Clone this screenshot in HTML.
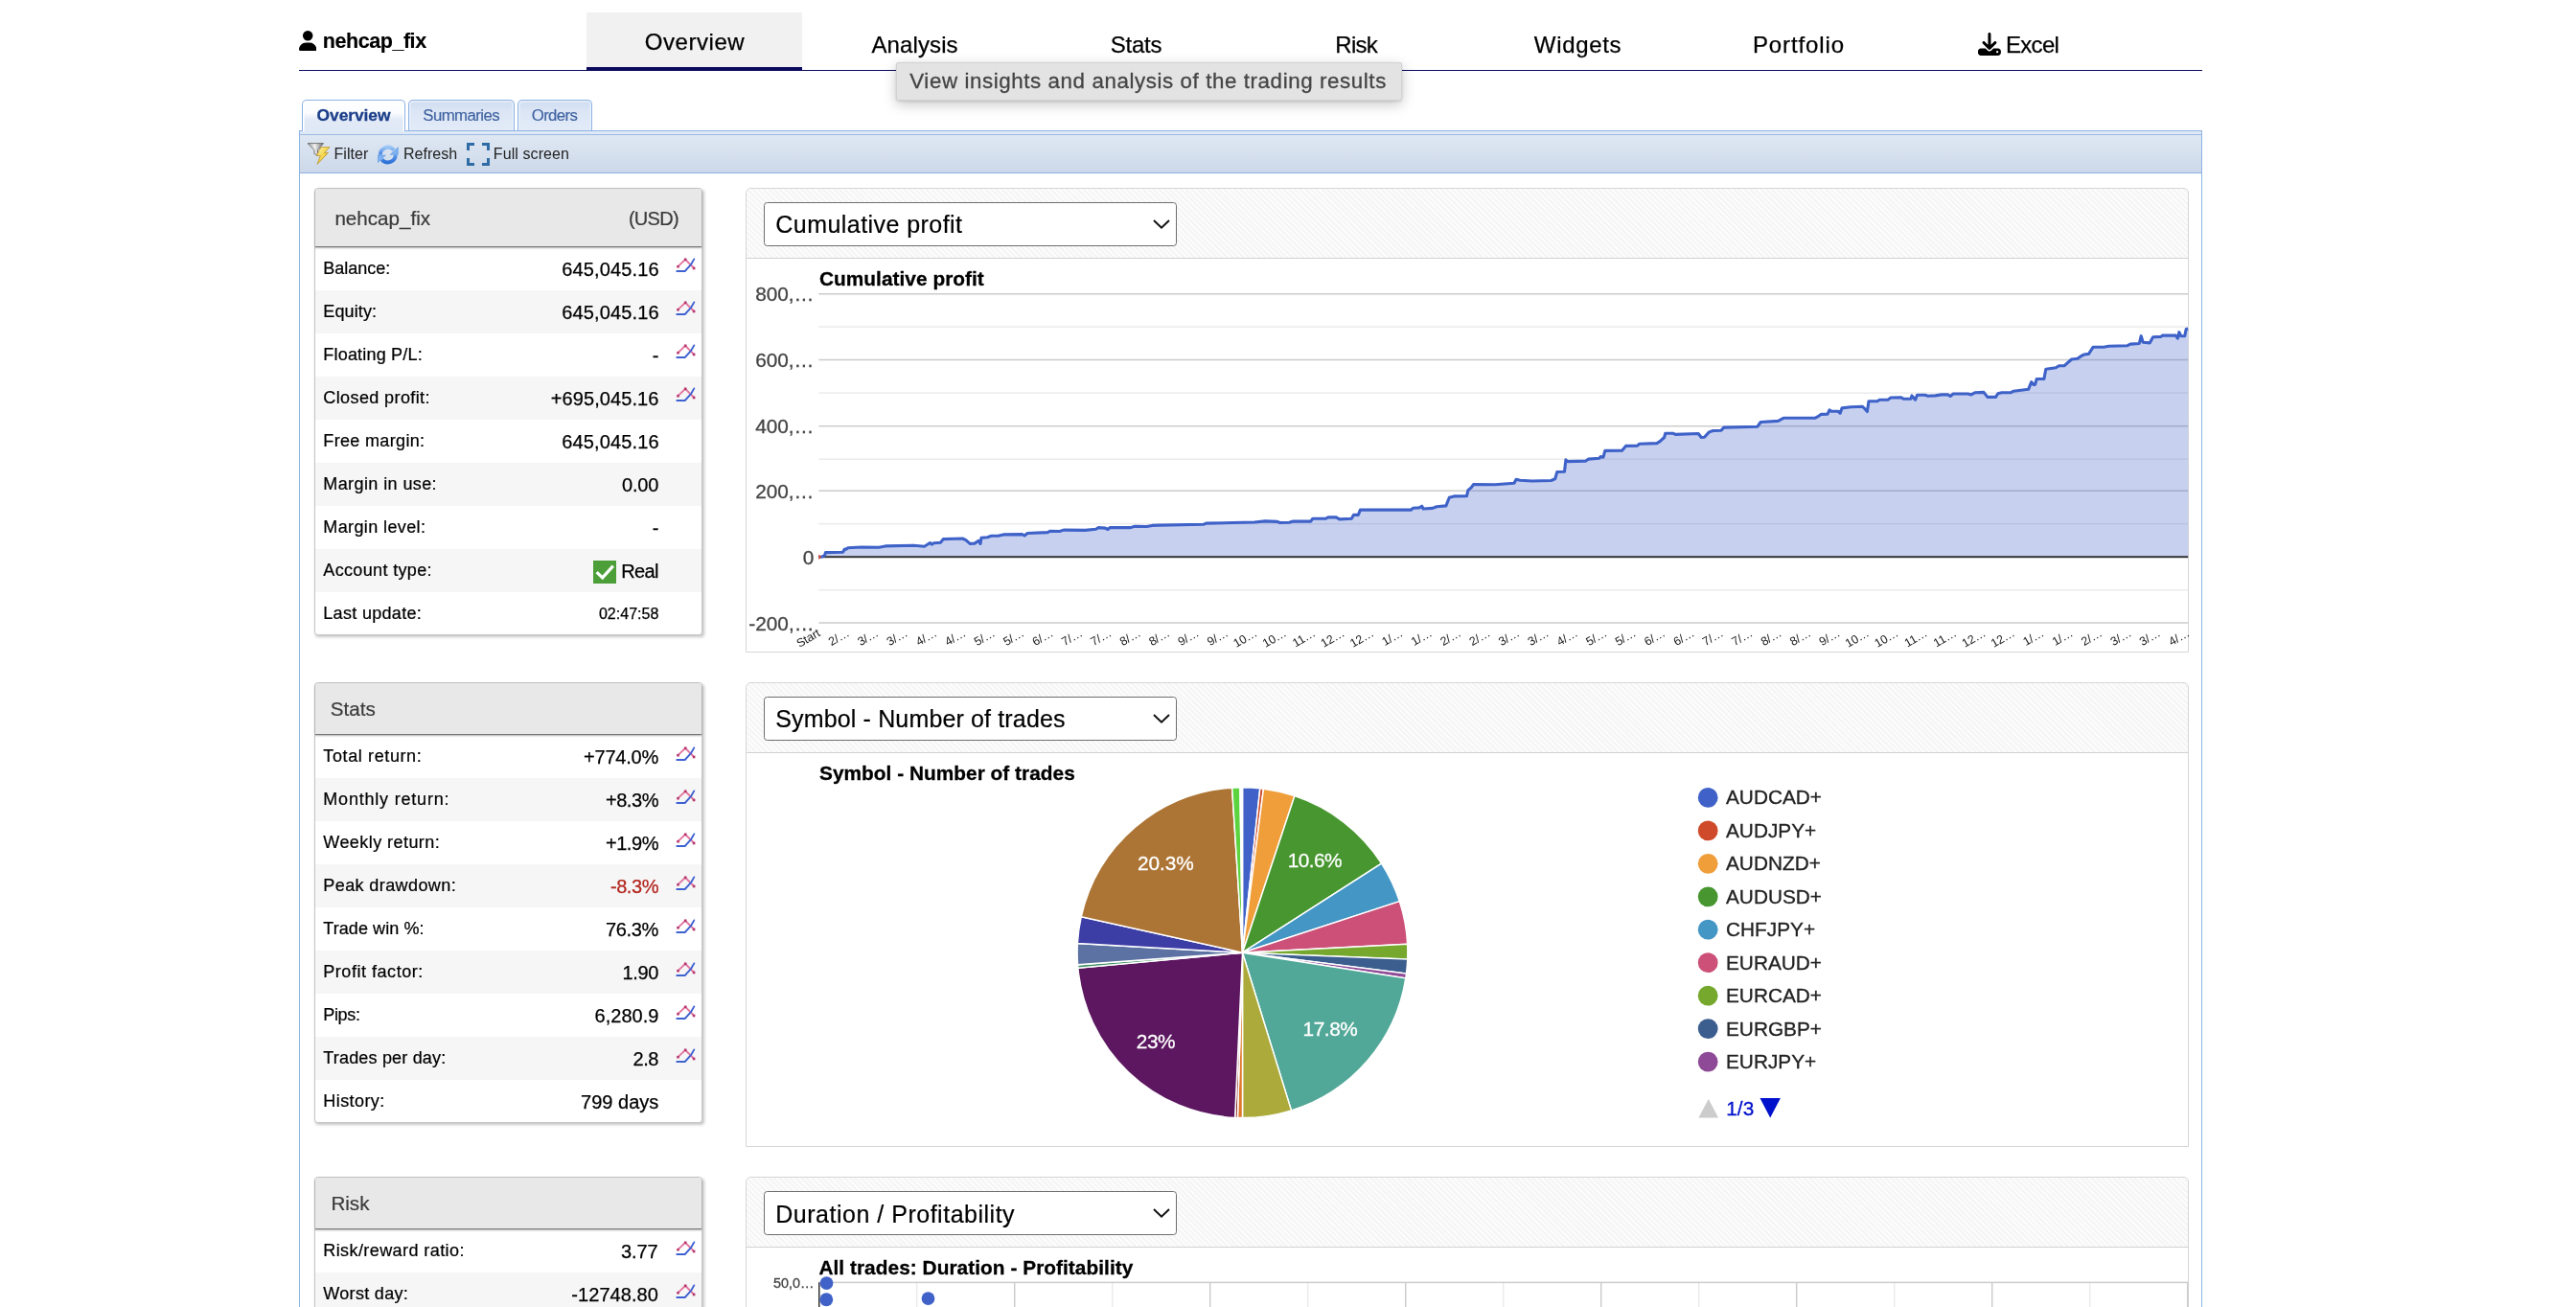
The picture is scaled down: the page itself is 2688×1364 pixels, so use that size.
<!DOCTYPE html>
<html><head><meta charset="utf-8"><title>nehcap_fix</title>
<style>
html,body{margin:0;padding:0;background:#fff;}
body{width:2688px;height:1364px;overflow:hidden;position:relative;font-family:"Liberation Sans",sans-serif;}
.a{position:absolute;}
.t{position:absolute;white-space:nowrap;font-family:"Liberation Sans",sans-serif;}
#w{position:absolute;left:0;top:0;width:2688px;height:1364px;will-change:transform;}
</style></head><body><div id="w">
<div class="a" style="left:612px;top:13px;width:225px;height:61px;background:#f1f1f1;border-bottom:4px solid #0b0b5e;box-sizing:border-box;"></div>
<div class="a" style="left:312px;top:73px;width:1986px;height:1px;background:#0b0b5e;"></div>
<svg class="a" style="left:312px;top:32.4px" width="18.4" height="21" viewBox="0 0 448 512"><path fill="#000" d="M224 256A128 128 0 1 0 224 0a128 128 0 1 0 0 256zm-45.700 48C79.800 304 0 383.800 0 482.300C0 498.700 13.300 512 29.700 512H418.300c16.400 0 29.700-13.300 29.700-29.700C448 383.800 368.200 304 269.700 304H178.300z"/></svg>
<div class="t" style="left:336.80px;top:30.25px;font-size:21.5px;line-height:26px;color:#000;font-weight:bold;letter-spacing:-0.448px;-webkit-text-stroke:0.15px #000;">nehcap_fix</div>
<div class="t" style="left:672.70px;top:28.58px;font-size:24px;line-height:29px;color:#000;letter-spacing:0.569px;-webkit-text-stroke:0.25px #000;">Overview</div>
<div class="t" style="left:909.50px;top:32.18px;font-size:24px;line-height:29px;color:#000;letter-spacing:0.103px;-webkit-text-stroke:0.25px #000;">Analysis</div>
<div class="t" style="left:1158.75px;top:32.18px;font-size:24px;line-height:29px;color:#000;letter-spacing:-0.242px;-webkit-text-stroke:0.25px #000;">Stats</div>
<div class="t" style="left:1393.30px;top:32.18px;font-size:24px;line-height:29px;color:#000;letter-spacing:-0.700px;-webkit-text-stroke:0.25px #000;">Risk</div>
<div class="t" style="left:1600.80px;top:32.18px;font-size:24px;line-height:29px;color:#000;letter-spacing:0.677px;-webkit-text-stroke:0.25px #000;">Widgets</div>
<div class="t" style="left:1828.90px;top:32.18px;font-size:24px;line-height:29px;color:#000;letter-spacing:0.900px;-webkit-text-stroke:0.25px #000;">Portfolio</div>
<div class="t" style="left:2093.00px;top:31.98px;font-size:24px;line-height:29px;color:#000;letter-spacing:-0.700px;-webkit-text-stroke:0.25px #000;">Excel</div>
<svg class="a" style="left:2063.9px;top:34px" width="23.9" height="23.9" viewBox="0 0 512 512"><path fill="#000" d="M288 32c0-17.700-14.300-32-32-32s-32 14.300-32 32V274.700l-73.400-73.400c-12.500-12.500-32.800-12.500-45.300 0s-12.500 32.800 0 45.300l128 128c12.500 12.500 32.800 12.500 45.300 0l128-128c12.500-12.500 12.500-32.800 0-45.300s-32.800-12.500-45.300 0L288 274.700V32zM64 352c-35.300 0-64 28.700-64 64v32c0 35.300 28.700 64 64 64H448c35.300 0 64-28.700 64-64V416c0-35.300-28.700-64-64-64H346.500l-45.300 45.300c-25 25-65.500 25-90.500 0L165.500 352H64zm368 56a24 24 0 1 1 0 48 24 24 0 1 1 0-48z"/></svg>
<div class="a" style="left:312px;top:136px;width:1986px;height:1300px;border:1px solid #8db2e3;border-right-width:1.5px;box-sizing:border-box;background:#fff;"></div>
<div class="a" style="left:313px;top:137px;width:1983.5px;height:3px;background:#dfe8f6;"></div>
<div class="a" style="left:313px;top:140px;width:1983.5px;height:41px;background:linear-gradient(#dee7f3,#d6e0ee 50%,#ccd8e9);border-top:1px solid #9dbbe6;border-bottom:1px solid #8fb0e2;box-sizing:border-box;"></div>
<div class="a" style="left:315px;top:104px;width:107.69999999999999px;height:33px;border:1.5px solid #8db2e3;border-bottom:none;border-radius:5px 5px 0 0;box-sizing:border-box;background:linear-gradient(#fff,#fbfcfe 40%,#e2eaf7 62%,#dfe8f6);box-shadow:inset 1.5px 1.5px 0 #fff,inset -1.5px 0 0 #fff;"></div>
<div class="a" style="left:426.2px;top:104px;width:110.59999999999997px;height:32px;border:1.5px solid #8db2e3;border-bottom:none;border-radius:5px 5px 0 0;box-sizing:border-box;background:linear-gradient(#cfdcf1,#dbe5f5 35%,#e3ebf8);box-shadow:inset 1.5px 1.5px 0 #e9f0fa,inset -1.5px 0 0 #e9f0fa;"></div>
<div class="a" style="left:540.2px;top:104px;width:77.5px;height:32px;border:1.5px solid #8db2e3;border-bottom:none;border-radius:5px 5px 0 0;box-sizing:border-box;background:linear-gradient(#cfdcf1,#dbe5f5 35%,#e3ebf8);box-shadow:inset 1.5px 1.5px 0 #e9f0fa,inset -1.5px 0 0 #e9f0fa;"></div>
<div class="t" style="left:330.60px;top:110.47px;font-size:17.4px;line-height:21px;color:#1c3f8a;font-weight:bold;letter-spacing:-0.061px;-webkit-text-stroke:0.3px #1c3f8a;">Overview</div>
<div class="t" style="left:441.30px;top:111.18px;font-size:16.8px;line-height:20px;color:#3f62a0;letter-spacing:-0.576px;-webkit-text-stroke:0.15px #3f62a0;">Summaries</div>
<div class="t" style="left:554.70px;top:111.18px;font-size:16.8px;line-height:20px;color:#3f62a0;letter-spacing:-0.602px;-webkit-text-stroke:0.15px #3f62a0;">Orders</div>
<div class="t" style="left:348.50px;top:150.86px;font-size:16px;line-height:19px;color:#222;letter-spacing:0.036px;">Filter</div>
<div class="t" style="left:420.90px;top:150.86px;font-size:16px;line-height:19px;color:#222;letter-spacing:0.050px;">Refresh</div>
<div class="t" style="left:514.80px;top:150.86px;font-size:16px;line-height:19px;color:#222;letter-spacing:0.096px;">Full screen</div>
<svg class="a" style="left:320px;top:148px" width="26" height="25" viewBox="0 0 26 25">
<defs><linearGradient id="fg" x1="0" x2="1"><stop offset="0" stop-color="#9a9a9a"/><stop offset=".45" stop-color="#f2f2f2"/><stop offset="1" stop-color="#6d6d6d"/></linearGradient>
<linearGradient id="yg" x1="0" y1="0" x2="1" y2="1"><stop offset="0" stop-color="#fff6b0"/><stop offset=".5" stop-color="#f3d54a"/><stop offset="1" stop-color="#c9971a"/></linearGradient></defs>
<path d="M1 1.600H17.500L11.500 8.500V14.500L8 12.500V8.500Z" fill="url(#fg)" stroke="#5c5c5c" stroke-width=".8"/>
<path d="M15 5.600H24L18.500 11.400H22.500L11 23.400L14.300 14.400H10.300Z" fill="url(#yg)" stroke="#b58a1c" stroke-width=".7"/></svg>
<svg class="a" style="left:394.400px;top:150.500px" width="22" height="22" viewBox="0 0 22 22">
<defs><linearGradient id="rg" x1="0" y1="0" x2="0" y2="1"><stop offset="0" stop-color="#9cc6f6"/><stop offset="1" stop-color="#3f7fe0"/></linearGradient>
<linearGradient id="rg2" x1="0" y1="0" x2="0" y2="1"><stop offset="0" stop-color="#5d9bec"/><stop offset="1" stop-color="#2f72d8"/></linearGradient></defs>
<path d="M2.800 10.600A8 8 0 0 1 17 5.600" fill="none" stroke="url(#rg)" stroke-width="3.900"/>
<path d="M21.300 2.800V10.300H13.200Z" fill="#7fb2f0" stroke="#4a8ae3" stroke-width=".5"/>
<path d="M18.700 10.400A8 8 0 0 1 4.500 15.400" fill="none" stroke="url(#rg2)" stroke-width="3.900"/>
<path d="M.200 18.600V11.100H8.300Z" fill="#7fb2f0" stroke="#4a8ae3" stroke-width=".5"/></svg>
<svg class="a" style="left:487px;top:149px" width="24" height="24" viewBox="0 0 24 24"><path d="M1.500 8V1.500H8M16 1.500H22.500V8M22.500 16V22.500H16M8 22.500H1.500V16" fill="none" stroke="#2f6ca6" stroke-width="3"/></svg>
<div class="a" style="left:328px;top:196px;width:405px;height:466.5px;border:1px solid #c4c4c4;border-radius:3.5px;box-sizing:border-box;background:#fff;box-shadow:1.5px 2px 3px rgba(0,0,0,.22);overflow:hidden;"></div>
<div class="a" style="left:329px;top:197px;width:403px;height:59.5px;background:#e8e8e8;border-bottom:1.5px solid #777;border-radius:3px 3px 0 0;box-shadow:0 1px 2px rgba(0,0,0,.3);"></div>
<div class="t" style="left:349.40px;top:215.36px;font-size:20.6px;line-height:25px;color:#3a3a3a;-webkit-text-stroke:0.2px #3a3a3a;">nehcap_fix</div>
<div class="t" style="left:655.90px;top:216.07px;font-size:20px;line-height:24px;color:#3a3a3a;letter-spacing:-0.700px;-webkit-text-stroke:0.2px #3a3a3a;">(USD)</div>
<div class="t" style="left:337.30px;top:268.66px;font-size:18px;line-height:22px;color:#000;letter-spacing:-0.010px;-webkit-text-stroke:0.22px #000;">Balance:</div>
<div class="t" style="left:586.25px;top:268.57px;font-size:20px;line-height:24px;color:#000;letter-spacing:0.128px;-webkit-text-stroke:0.25px #000;">645,045.16</div>
<svg class="a" style="left:705px;top:268.3px" width="22" height="17" viewBox="0 0 22 17"><path d="M2.400 10.100L10.100 2.800L19.300 12" fill="none" stroke="#e2759f" stroke-width="1.900"/><path d="M1.300 15H9.700L16.200 7.800L19.300 2.400" fill="none" stroke="#3f62d2" stroke-width="1.900" stroke-linejoin="round" stroke-linecap="round"/><rect x="1.200" y="8.900" width="2.600" height="2.600" fill="#b5376f"/><rect x="8.900" y="1.500" width="2.600" height="2.600" fill="#b5376f"/><rect x="17.800" y="10.700" width="2.600" height="2.600" fill="#b5376f"/></svg>
<div class="a" style="left:329px;top:302.5px;width:403px;height:45px;background:#f6f6f6;"></div>
<div class="t" style="left:337.30px;top:313.66px;font-size:18px;line-height:22px;color:#000;letter-spacing:0.120px;-webkit-text-stroke:0.22px #000;">Equity:</div>
<div class="t" style="left:586.25px;top:313.57px;font-size:20px;line-height:24px;color:#000;letter-spacing:0.128px;-webkit-text-stroke:0.25px #000;">645,045.16</div>
<svg class="a" style="left:705px;top:313.3px" width="22" height="17" viewBox="0 0 22 17"><path d="M2.400 10.100L10.100 2.800L19.300 12" fill="none" stroke="#e2759f" stroke-width="1.900"/><path d="M1.300 15H9.700L16.200 7.800L19.300 2.400" fill="none" stroke="#3f62d2" stroke-width="1.900" stroke-linejoin="round" stroke-linecap="round"/><rect x="1.200" y="8.900" width="2.600" height="2.600" fill="#b5376f"/><rect x="8.900" y="1.500" width="2.600" height="2.600" fill="#b5376f"/><rect x="17.800" y="10.700" width="2.600" height="2.600" fill="#b5376f"/></svg>
<div class="t" style="left:337.30px;top:358.66px;font-size:18px;line-height:22px;color:#000;letter-spacing:0.193px;-webkit-text-stroke:0.22px #000;">Floating P/L:</div>
<div class="t" style="left:680.80px;top:358.57px;font-size:20px;line-height:24px;color:#000;letter-spacing:0.180px;-webkit-text-stroke:0.25px #000;">-</div>
<svg class="a" style="left:705px;top:358.3px" width="22" height="17" viewBox="0 0 22 17"><path d="M2.400 10.100L10.100 2.800L19.300 12" fill="none" stroke="#e2759f" stroke-width="1.900"/><path d="M1.300 15H9.700L16.200 7.800L19.300 2.400" fill="none" stroke="#3f62d2" stroke-width="1.900" stroke-linejoin="round" stroke-linecap="round"/><rect x="1.200" y="8.900" width="2.600" height="2.600" fill="#b5376f"/><rect x="8.900" y="1.500" width="2.600" height="2.600" fill="#b5376f"/><rect x="17.800" y="10.700" width="2.600" height="2.600" fill="#b5376f"/></svg>
<div class="a" style="left:329px;top:392.5px;width:403px;height:45px;background:#f6f6f6;"></div>
<div class="t" style="left:337.30px;top:403.66px;font-size:18px;line-height:22px;color:#000;letter-spacing:0.398px;-webkit-text-stroke:0.22px #000;">Closed profit:</div>
<div class="t" style="left:574.75px;top:403.57px;font-size:20px;line-height:24px;color:#000;letter-spacing:0.085px;-webkit-text-stroke:0.25px #000;">+695,045.16</div>
<svg class="a" style="left:705px;top:403.3px" width="22" height="17" viewBox="0 0 22 17"><path d="M2.400 10.100L10.100 2.800L19.300 12" fill="none" stroke="#e2759f" stroke-width="1.900"/><path d="M1.300 15H9.700L16.200 7.800L19.300 2.400" fill="none" stroke="#3f62d2" stroke-width="1.900" stroke-linejoin="round" stroke-linecap="round"/><rect x="1.200" y="8.900" width="2.600" height="2.600" fill="#b5376f"/><rect x="8.900" y="1.500" width="2.600" height="2.600" fill="#b5376f"/><rect x="17.800" y="10.700" width="2.600" height="2.600" fill="#b5376f"/></svg>
<div class="t" style="left:337.30px;top:448.66px;font-size:18px;line-height:22px;color:#000;letter-spacing:0.340px;-webkit-text-stroke:0.22px #000;">Free margin:</div>
<div class="t" style="left:586.25px;top:448.57px;font-size:20px;line-height:24px;color:#000;letter-spacing:0.128px;-webkit-text-stroke:0.25px #000;">645,045.16</div>
<div class="a" style="left:329px;top:482.5px;width:403px;height:45px;background:#f6f6f6;"></div>
<div class="t" style="left:337.30px;top:493.66px;font-size:18px;line-height:22px;color:#000;letter-spacing:0.405px;-webkit-text-stroke:0.22px #000;">Margin in use:</div>
<div class="t" style="left:649.10px;top:493.57px;font-size:20px;line-height:24px;color:#000;letter-spacing:-0.233px;-webkit-text-stroke:0.25px #000;">0.00</div>
<div class="t" style="left:337.30px;top:538.66px;font-size:18px;line-height:22px;color:#000;letter-spacing:0.387px;-webkit-text-stroke:0.22px #000;">Margin level:</div>
<div class="t" style="left:680.80px;top:538.57px;font-size:20px;line-height:24px;color:#000;letter-spacing:0.180px;-webkit-text-stroke:0.25px #000;">-</div>
<div class="a" style="left:329px;top:572.5px;width:403px;height:45px;background:#f6f6f6;"></div>
<div class="t" style="left:337.30px;top:583.66px;font-size:18px;line-height:22px;color:#000;letter-spacing:0.352px;-webkit-text-stroke:0.22px #000;">Account type:</div>
<div class="t" style="left:648.30px;top:583.57px;font-size:20px;line-height:24px;color:#000;letter-spacing:-0.700px;-webkit-text-stroke:0.25px #000;">Real</div>
<div class="t" style="left:337.30px;top:628.66px;font-size:18px;line-height:22px;color:#000;letter-spacing:0.314px;-webkit-text-stroke:0.22px #000;">Last update:</div>
<div class="t" style="left:624.90px;top:631.46px;font-size:16px;line-height:19px;color:#000;letter-spacing:0.037px;-webkit-text-stroke:0.25px #000;">02:47:58</div>
<svg class="a" style="left:619px;top:585px" width="24" height="24" viewBox="0 0 24 24"><rect width="24" height="24" fill="#4c9f38"/><path d="M3.600 12.200L9.700 17.900L20.800 5.700" fill="none" stroke="#fff" stroke-width="3.200"/></svg>
<div class="a" style="left:328px;top:712px;width:405px;height:460px;border:1px solid #c4c4c4;border-radius:3.5px;box-sizing:border-box;background:#fff;box-shadow:1.5px 2px 3px rgba(0,0,0,.22);overflow:hidden;"></div>
<div class="a" style="left:329px;top:713px;width:403px;height:53px;background:#e8e8e8;border-bottom:1.5px solid #777;border-radius:3px 3px 0 0;box-shadow:0 1px 2px rgba(0,0,0,.3);"></div>
<div class="t" style="left:344.75px;top:726.96px;font-size:20.6px;line-height:25px;color:#3a3a3a;-webkit-text-stroke:0.2px #3a3a3a;">Stats</div>
<div class="t" style="left:337.30px;top:778.16px;font-size:18px;line-height:22px;color:#000;letter-spacing:0.617px;-webkit-text-stroke:0.22px #000;">Total return:</div>
<div class="t" style="left:609.00px;top:778.07px;font-size:20px;line-height:24px;color:#000;letter-spacing:-0.200px;-webkit-text-stroke:0.25px #000;">+774.0%</div>
<svg class="a" style="left:705px;top:777.8px" width="22" height="17" viewBox="0 0 22 17"><path d="M2.400 10.100L10.100 2.800L19.300 12" fill="none" stroke="#e2759f" stroke-width="1.900"/><path d="M1.300 15H9.700L16.200 7.800L19.300 2.400" fill="none" stroke="#3f62d2" stroke-width="1.900" stroke-linejoin="round" stroke-linecap="round"/><rect x="1.200" y="8.900" width="2.600" height="2.600" fill="#b5376f"/><rect x="8.900" y="1.500" width="2.600" height="2.600" fill="#b5376f"/><rect x="17.800" y="10.700" width="2.600" height="2.600" fill="#b5376f"/></svg>
<div class="a" style="left:329px;top:812px;width:403px;height:45px;background:#f6f6f6;"></div>
<div class="t" style="left:337.30px;top:823.16px;font-size:18px;line-height:22px;color:#000;letter-spacing:0.796px;-webkit-text-stroke:0.22px #000;">Monthly return:</div>
<div class="t" style="left:631.90px;top:823.07px;font-size:20px;line-height:24px;color:#000;letter-spacing:-0.425px;-webkit-text-stroke:0.25px #000;">+8.3%</div>
<svg class="a" style="left:705px;top:822.8px" width="22" height="17" viewBox="0 0 22 17"><path d="M2.400 10.100L10.100 2.800L19.300 12" fill="none" stroke="#e2759f" stroke-width="1.900"/><path d="M1.300 15H9.700L16.200 7.800L19.300 2.400" fill="none" stroke="#3f62d2" stroke-width="1.900" stroke-linejoin="round" stroke-linecap="round"/><rect x="1.200" y="8.900" width="2.600" height="2.600" fill="#b5376f"/><rect x="8.900" y="1.500" width="2.600" height="2.600" fill="#b5376f"/><rect x="17.800" y="10.700" width="2.600" height="2.600" fill="#b5376f"/></svg>
<div class="t" style="left:337.30px;top:868.16px;font-size:18px;line-height:22px;color:#000;letter-spacing:0.439px;-webkit-text-stroke:0.22px #000;">Weekly return:</div>
<div class="t" style="left:631.90px;top:868.07px;font-size:20px;line-height:24px;color:#000;letter-spacing:-0.425px;-webkit-text-stroke:0.25px #000;">+1.9%</div>
<svg class="a" style="left:705px;top:867.8px" width="22" height="17" viewBox="0 0 22 17"><path d="M2.400 10.100L10.100 2.800L19.300 12" fill="none" stroke="#e2759f" stroke-width="1.900"/><path d="M1.300 15H9.700L16.200 7.800L19.300 2.400" fill="none" stroke="#3f62d2" stroke-width="1.900" stroke-linejoin="round" stroke-linecap="round"/><rect x="1.200" y="8.900" width="2.600" height="2.600" fill="#b5376f"/><rect x="8.900" y="1.500" width="2.600" height="2.600" fill="#b5376f"/><rect x="17.800" y="10.700" width="2.600" height="2.600" fill="#b5376f"/></svg>
<div class="a" style="left:329px;top:902px;width:403px;height:45px;background:#f6f6f6;"></div>
<div class="t" style="left:337.30px;top:913.16px;font-size:18px;line-height:22px;color:#000;letter-spacing:0.406px;-webkit-text-stroke:0.22px #000;">Peak drawdown:</div>
<div class="t" style="left:636.90px;top:913.07px;font-size:20px;line-height:24px;color:#b3261e;letter-spacing:-0.425px;-webkit-text-stroke:0.25px #b3261e;">-8.3%</div>
<svg class="a" style="left:705px;top:912.8px" width="22" height="17" viewBox="0 0 22 17"><path d="M2.400 10.100L10.100 2.800L19.300 12" fill="none" stroke="#e2759f" stroke-width="1.900"/><path d="M1.300 15H9.700L16.200 7.800L19.300 2.400" fill="none" stroke="#3f62d2" stroke-width="1.900" stroke-linejoin="round" stroke-linecap="round"/><rect x="1.200" y="8.900" width="2.600" height="2.600" fill="#b5376f"/><rect x="8.900" y="1.500" width="2.600" height="2.600" fill="#b5376f"/><rect x="17.800" y="10.700" width="2.600" height="2.600" fill="#b5376f"/></svg>
<div class="t" style="left:337.30px;top:958.16px;font-size:18px;line-height:22px;color:#000;letter-spacing:0.073px;-webkit-text-stroke:0.22px #000;">Trade win %:</div>
<div class="t" style="left:631.90px;top:958.07px;font-size:20px;line-height:24px;color:#000;letter-spacing:-0.325px;-webkit-text-stroke:0.25px #000;">76.3%</div>
<svg class="a" style="left:705px;top:957.8px" width="22" height="17" viewBox="0 0 22 17"><path d="M2.400 10.100L10.100 2.800L19.300 12" fill="none" stroke="#e2759f" stroke-width="1.900"/><path d="M1.300 15H9.700L16.200 7.800L19.300 2.400" fill="none" stroke="#3f62d2" stroke-width="1.900" stroke-linejoin="round" stroke-linecap="round"/><rect x="1.200" y="8.900" width="2.600" height="2.600" fill="#b5376f"/><rect x="8.900" y="1.500" width="2.600" height="2.600" fill="#b5376f"/><rect x="17.800" y="10.700" width="2.600" height="2.600" fill="#b5376f"/></svg>
<div class="a" style="left:329px;top:992px;width:403px;height:45px;background:#f6f6f6;"></div>
<div class="t" style="left:337.30px;top:1003.16px;font-size:18px;line-height:22px;color:#000;letter-spacing:0.533px;-webkit-text-stroke:0.22px #000;">Profit factor:</div>
<div class="t" style="left:649.60px;top:1003.07px;font-size:20px;line-height:24px;color:#000;letter-spacing:-0.400px;-webkit-text-stroke:0.25px #000;">1.90</div>
<svg class="a" style="left:705px;top:1002.8px" width="22" height="17" viewBox="0 0 22 17"><path d="M2.400 10.100L10.100 2.800L19.300 12" fill="none" stroke="#e2759f" stroke-width="1.900"/><path d="M1.300 15H9.700L16.200 7.800L19.300 2.400" fill="none" stroke="#3f62d2" stroke-width="1.900" stroke-linejoin="round" stroke-linecap="round"/><rect x="1.200" y="8.900" width="2.600" height="2.600" fill="#b5376f"/><rect x="8.900" y="1.500" width="2.600" height="2.600" fill="#b5376f"/><rect x="17.800" y="10.700" width="2.600" height="2.600" fill="#b5376f"/></svg>
<div class="t" style="left:337.30px;top:1048.16px;font-size:18px;line-height:22px;color:#000;letter-spacing:-0.340px;-webkit-text-stroke:0.22px #000;">Pips:</div>
<div class="t" style="left:620.60px;top:1048.07px;font-size:20px;line-height:24px;color:#000;-webkit-text-stroke:0.25px #000;">6,280.9</div>
<svg class="a" style="left:705px;top:1047.8px" width="22" height="17" viewBox="0 0 22 17"><path d="M2.400 10.100L10.100 2.800L19.300 12" fill="none" stroke="#e2759f" stroke-width="1.900"/><path d="M1.300 15H9.700L16.200 7.800L19.300 2.400" fill="none" stroke="#3f62d2" stroke-width="1.900" stroke-linejoin="round" stroke-linecap="round"/><rect x="1.200" y="8.900" width="2.600" height="2.600" fill="#b5376f"/><rect x="8.900" y="1.500" width="2.600" height="2.600" fill="#b5376f"/><rect x="17.800" y="10.700" width="2.600" height="2.600" fill="#b5376f"/></svg>
<div class="a" style="left:329px;top:1082px;width:403px;height:45px;background:#f6f6f6;"></div>
<div class="t" style="left:337.30px;top:1093.16px;font-size:18px;line-height:22px;color:#000;letter-spacing:0.178px;-webkit-text-stroke:0.22px #000;">Trades per day:</div>
<div class="t" style="left:660.60px;top:1093.07px;font-size:20px;line-height:24px;color:#000;letter-spacing:-0.500px;-webkit-text-stroke:0.25px #000;">2.8</div>
<svg class="a" style="left:705px;top:1092.8px" width="22" height="17" viewBox="0 0 22 17"><path d="M2.400 10.100L10.100 2.800L19.300 12" fill="none" stroke="#e2759f" stroke-width="1.900"/><path d="M1.300 15H9.700L16.200 7.800L19.300 2.400" fill="none" stroke="#3f62d2" stroke-width="1.900" stroke-linejoin="round" stroke-linecap="round"/><rect x="1.200" y="8.900" width="2.600" height="2.600" fill="#b5376f"/><rect x="8.900" y="1.500" width="2.600" height="2.600" fill="#b5376f"/><rect x="17.800" y="10.700" width="2.600" height="2.600" fill="#b5376f"/></svg>
<div class="t" style="left:337.30px;top:1138.16px;font-size:18px;line-height:22px;color:#000;letter-spacing:0.419px;-webkit-text-stroke:0.22px #000;">History:</div>
<div class="t" style="left:606.00px;top:1138.07px;font-size:20px;line-height:24px;color:#000;letter-spacing:0.029px;-webkit-text-stroke:0.25px #000;">799 days</div>
<div class="a" style="left:328px;top:1228px;width:405px;height:324.70000000000005px;border:1px solid #c4c4c4;border-radius:3.5px;box-sizing:border-box;background:#fff;box-shadow:1.5px 2px 3px rgba(0,0,0,.22);overflow:hidden;"></div>
<div class="a" style="left:329px;top:1229px;width:403px;height:53.25px;background:#e8e8e8;border-bottom:1.5px solid #777;border-radius:3px 3px 0 0;box-shadow:0 1px 2px rgba(0,0,0,.3);"></div>
<div class="t" style="left:345.40px;top:1243.26px;font-size:20.6px;line-height:25px;color:#3a3a3a;-webkit-text-stroke:0.2px #3a3a3a;">Risk</div>
<div class="t" style="left:337.30px;top:1293.86px;font-size:18px;line-height:22px;color:#000;letter-spacing:0.415px;-webkit-text-stroke:0.22px #000;">Risk/reward ratio:</div>
<div class="t" style="left:648.00px;top:1293.77px;font-size:20px;line-height:24px;color:#000;letter-spacing:-0.067px;-webkit-text-stroke:0.25px #000;">3.77</div>
<svg class="a" style="left:705px;top:1293.5px" width="22" height="17" viewBox="0 0 22 17"><path d="M2.400 10.100L10.100 2.800L19.300 12" fill="none" stroke="#e2759f" stroke-width="1.900"/><path d="M1.300 15H9.700L16.200 7.800L19.300 2.400" fill="none" stroke="#3f62d2" stroke-width="1.900" stroke-linejoin="round" stroke-linecap="round"/><rect x="1.200" y="8.900" width="2.600" height="2.600" fill="#b5376f"/><rect x="8.900" y="1.500" width="2.600" height="2.600" fill="#b5376f"/><rect x="17.800" y="10.700" width="2.600" height="2.600" fill="#b5376f"/></svg>
<div class="a" style="left:329px;top:1327.7px;width:403px;height:45px;background:#f6f6f6;"></div>
<div class="t" style="left:337.30px;top:1338.86px;font-size:18px;line-height:22px;color:#000;letter-spacing:0.313px;-webkit-text-stroke:0.22px #000;">Worst day:</div>
<div class="t" style="left:596.30px;top:1338.77px;font-size:20px;line-height:24px;color:#000;letter-spacing:0.062px;-webkit-text-stroke:0.25px #000;">-12748.80</div>
<svg class="a" style="left:705px;top:1338.5px" width="22" height="17" viewBox="0 0 22 17"><path d="M2.400 10.100L10.100 2.800L19.300 12" fill="none" stroke="#e2759f" stroke-width="1.900"/><path d="M1.300 15H9.700L16.200 7.800L19.300 2.400" fill="none" stroke="#3f62d2" stroke-width="1.900" stroke-linejoin="round" stroke-linecap="round"/><rect x="1.200" y="8.900" width="2.600" height="2.600" fill="#b5376f"/><rect x="8.900" y="1.500" width="2.600" height="2.600" fill="#b5376f"/><rect x="17.800" y="10.700" width="2.600" height="2.600" fill="#b5376f"/></svg>
<div class="t" style="left:337.30px;top:1383.86px;font-size:18px;line-height:22px;color:#000;-webkit-text-stroke:0.22px #000;">Best day:</div>
<div class="a" style="left:778px;top:196px;width:1506px;height:485px;border:1px solid #d6d6d6;border-radius:6px 6px 1px 1px;box-sizing:border-box;background:#fff;overflow:hidden;box-shadow:0 0 .5px #ddd;"></div>
<div class="a" style="left:779px;top:197px;width:1504px;height:72px;background:#f5f5f5 repeating-linear-gradient(45deg,rgba(255,255,255,.7) 0,rgba(255,255,255,.7) 2px,rgba(0,0,0,0) 2px,rgba(0,0,0,0) 4px);border-bottom:1px solid #d2d2d2;border-radius:5px 5px 0 0;"></div>
<div class="a" style="left:797px;top:211px;width:431px;height:45.5px;border:1.3px solid #6e6e6e;border-radius:3.5px;box-sizing:border-box;background:#fff;"></div>
<div class="t" style="left:809.30px;top:219.34px;font-size:25px;line-height:30px;color:#000;letter-spacing:0.450px;-webkit-text-stroke:0.2px #000;">Cumulative profit</div>
<svg class="a" style="left:1202px;top:228px" width="20" height="12" viewBox="0 0 20 12"><path d="M2 2L10 9.700L18 2" fill="none" stroke="#111" stroke-width="2"/></svg>
<div class="a" style="left:778px;top:712px;width:1506px;height:485px;border:1px solid #d6d6d6;border-radius:6px 6px 1px 1px;box-sizing:border-box;background:#fff;overflow:hidden;box-shadow:0 0 .5px #ddd;"></div>
<div class="a" style="left:779px;top:713px;width:1504px;height:72px;background:#f5f5f5 repeating-linear-gradient(45deg,rgba(255,255,255,.7) 0,rgba(255,255,255,.7) 2px,rgba(0,0,0,0) 2px,rgba(0,0,0,0) 4px);border-bottom:1px solid #d2d2d2;border-radius:5px 5px 0 0;"></div>
<div class="a" style="left:797px;top:727px;width:431px;height:45.5px;border:1.3px solid #6e6e6e;border-radius:3.5px;box-sizing:border-box;background:#fff;"></div>
<div class="t" style="left:809.30px;top:735.34px;font-size:25px;line-height:30px;color:#000;letter-spacing:0.144px;-webkit-text-stroke:0.2px #000;">Symbol - Number of trades</div>
<svg class="a" style="left:1202px;top:744px" width="20" height="12" viewBox="0 0 20 12"><path d="M2 2L10 9.700L18 2" fill="none" stroke="#111" stroke-width="2"/></svg>
<div class="a" style="left:778px;top:1228.3px;width:1506px;height:485px;border:1px solid #d6d6d6;border-radius:6px 6px 1px 1px;box-sizing:border-box;background:#fff;overflow:hidden;box-shadow:0 0 .5px #ddd;"></div>
<div class="a" style="left:779px;top:1229.3px;width:1504px;height:72px;background:#f5f5f5 repeating-linear-gradient(45deg,rgba(255,255,255,.7) 0,rgba(255,255,255,.7) 2px,rgba(0,0,0,0) 2px,rgba(0,0,0,0) 4px);border-bottom:1px solid #d2d2d2;border-radius:5px 5px 0 0;"></div>
<div class="a" style="left:797px;top:1243.3px;width:431px;height:45.5px;border:1.3px solid #6e6e6e;border-radius:3.5px;box-sizing:border-box;background:#fff;"></div>
<div class="t" style="left:809.30px;top:1251.64px;font-size:25px;line-height:30px;color:#000;letter-spacing:0.509px;-webkit-text-stroke:0.2px #000;">Duration / Profitability</div>
<svg class="a" style="left:1202px;top:1260.3px" width="20" height="12" viewBox="0 0 20 12"><path d="M2 2L10 9.700L18 2" fill="none" stroke="#111" stroke-width="2"/></svg>
<svg class="a" style="left:0;top:0" width="2688" height="1364" viewBox="0 0 2688 1364" font-family="Liberation Sans, sans-serif"><rect x="854.3" y="306.00" width="1428.9" height="1.5" fill="#cccccc"/>
<rect x="854.3" y="340.35" width="1428.9" height="1.5" fill="#ebebeb"/>
<rect x="854.3" y="374.75" width="1428.9" height="1.5" fill="#cccccc"/>
<rect x="854.3" y="409.35" width="1428.9" height="1.5" fill="#ebebeb"/>
<rect x="854.3" y="443.95" width="1428.9" height="1.5" fill="#cccccc"/>
<rect x="854.3" y="478.45" width="1428.9" height="1.5" fill="#ebebeb"/>
<rect x="854.3" y="511.45" width="1428.9" height="1.5" fill="#cccccc"/>
<rect x="854.3" y="545.95" width="1428.9" height="1.5" fill="#ebebeb"/>
<rect x="854.3" y="615.05" width="1428.9" height="1.5" fill="#ebebeb"/>
<rect x="854.3" y="649.25" width="1428.9" height="1.5" fill="#cccccc"/>
<polygon points="854.3,581.2 854.3,581.2 857.7,581.0 860.5,579.7 861.5,576.6 879.6,576.3 881.4,573.0 882.8,573.3 884.9,571.8 898.9,571.0 917.0,571.3 924.0,569.9 953.4,569.3 964.6,570.2 970.5,566.5 972.3,568.2 974.4,566.8 981.4,566.2 984.4,562.6 995.3,562.3 1004.4,562.0 1007.9,563.7 1012.1,567.4 1017.0,567.1 1021.2,564.3 1023.0,567.4 1024.0,561.2 1030.3,560.7 1034.5,559.3 1041.5,559.3 1047.0,557.9 1066.6,557.6 1069.1,559.0 1072.2,556.5 1093.2,555.6 1096.0,554.2 1105.7,554.5 1109.9,553.1 1132.3,553.4 1143.5,552.3 1146.3,550.6 1153.3,551.1 1156.0,552.5 1158.1,550.6 1179.8,550.6 1184.0,549.2 1196.6,549.5 1202.2,548.4 1210.0,548.1 1255.9,547.2 1258.7,546.1 1309.0,545.0 1320.2,543.9 1332.8,544.4 1335.6,545.5 1345.3,545.2 1349.5,544.1 1367.7,544.1 1369.8,541.3 1383.1,541.3 1385.9,539.9 1394.3,539.9 1397.7,541.9 1410.3,541.3 1412.4,537.4 1417.3,537.4 1419.4,532.1 1472.5,532.1 1474.6,530.2 1480.9,529.9 1483.7,528.2 1485.1,531.0 1494.9,530.4 1499.1,528.8 1508.9,527.9 1512.3,519.3 1517.2,517.9 1530.5,517.6 1531.9,511.7 1535.4,508.6 1537.5,505.6 1560.0,505.8 1580.0,504.3 1582.1,500.3 1586.3,501.2 1598.9,502.0 1618.5,501.5 1622.7,499.8 1624.8,492.5 1632.5,492.2 1633.9,479.9 1635.9,481.6 1654.8,481.1 1657.6,479.1 1668.8,478.3 1670.2,476.6 1673.0,477.1 1674.8,470.4 1692.5,470.2 1696.5,465.4 1708.6,465.1 1710.7,463.2 1728.9,462.6 1732.4,460.4 1736.6,456.5 1737.7,452.3 1745.7,452.3 1748.4,453.4 1772.2,452.5 1775.3,456.5 1778.5,456.2 1783.4,450.9 1787.6,449.5 1796.0,449.2 1798.8,446.1 1833.7,445.3 1837.2,440.5 1855.4,439.4 1861.0,436.3 1893.8,436.3 1898.0,434.1 1900.1,432.4 1907.0,432.1 1909.0,427.8 1910.9,429.3 1917.9,429.3 1920.2,431.2 1922.0,425.9 1931.1,424.7 1943.5,424.3 1945.8,426.5 1948.4,429.6 1950.0,418.8 1959.0,418.8 1961.3,417.2 1969.9,417.2 1973.0,415.0 1983.9,414.7 1986.2,416.3 1993.9,416.3 1995.0,412.9 1998.6,417.2 2000.6,412.2 2008.7,412.2 2011.8,413.2 2019.6,412.9 2025.8,411.9 2032.8,411.9 2035.1,413.5 2038.2,411.0 2053.7,411.0 2056.8,411.9 2060.7,409.8 2070.0,409.4 2073.9,414.4 2082.5,414.4 2084.8,410.7 2088.7,409.8 2098.0,409.8 2101.1,408.2 2116.6,406.3 2119.7,398.6 2122.0,401.4 2123.6,401.4 2125.2,395.5 2132.9,395.5 2134.8,385.2 2145.3,383.7 2148.4,381.8 2153.9,381.8 2161.6,375.0 2167.9,374.3 2171.0,371.9 2174.8,370.0 2179.5,369.4 2184.2,362.2 2195.0,362.2 2200.5,361.3 2219.9,360.7 2223.0,359.1 2232.3,358.5 2234.2,350.7 2236.2,357.3 2243.2,357.9 2246.6,351.7 2254.8,351.4 2256.4,350.1 2270.3,350.1 2272.4,353.2 2273.9,346.7 2275.8,350.7 2279.7,350.7 2281.2,343.6 2283.1,343.0 2283.2,581.2" fill="#3f62c9" fill-opacity=".29"/>
<rect x="854.3" y="580.2" width="1428.9" height="2" fill="#333"/>
<polyline points="854.3,581.2 857.7,581.0 860.5,579.7 861.5,576.6 879.6,576.3 881.4,573.0 882.8,573.3 884.9,571.8 898.9,571.0 917.0,571.3 924.0,569.9 953.4,569.3 964.6,570.2 970.5,566.5 972.3,568.2 974.4,566.8 981.4,566.2 984.4,562.6 995.3,562.3 1004.4,562.0 1007.9,563.7 1012.1,567.4 1017.0,567.1 1021.2,564.3 1023.0,567.4 1024.0,561.2 1030.3,560.7 1034.5,559.3 1041.5,559.3 1047.0,557.9 1066.6,557.6 1069.1,559.0 1072.2,556.5 1093.2,555.6 1096.0,554.2 1105.7,554.5 1109.9,553.1 1132.3,553.4 1143.5,552.3 1146.3,550.6 1153.3,551.1 1156.0,552.5 1158.1,550.6 1179.8,550.6 1184.0,549.2 1196.6,549.5 1202.2,548.4 1210.0,548.1 1255.9,547.2 1258.7,546.1 1309.0,545.0 1320.2,543.9 1332.8,544.4 1335.6,545.5 1345.3,545.2 1349.5,544.1 1367.7,544.1 1369.8,541.3 1383.1,541.3 1385.9,539.9 1394.3,539.9 1397.7,541.9 1410.3,541.3 1412.4,537.4 1417.3,537.4 1419.4,532.1 1472.5,532.1 1474.6,530.2 1480.9,529.9 1483.7,528.2 1485.1,531.0 1494.9,530.4 1499.1,528.8 1508.9,527.9 1512.3,519.3 1517.2,517.9 1530.5,517.6 1531.9,511.7 1535.4,508.6 1537.5,505.6 1560.0,505.8 1580.0,504.3 1582.1,500.3 1586.3,501.2 1598.9,502.0 1618.5,501.5 1622.7,499.8 1624.8,492.5 1632.5,492.2 1633.9,479.9 1635.9,481.6 1654.8,481.1 1657.6,479.1 1668.8,478.3 1670.2,476.6 1673.0,477.1 1674.8,470.4 1692.5,470.2 1696.5,465.4 1708.6,465.1 1710.7,463.2 1728.9,462.6 1732.4,460.4 1736.6,456.5 1737.7,452.3 1745.7,452.3 1748.4,453.4 1772.2,452.5 1775.3,456.5 1778.5,456.2 1783.4,450.9 1787.6,449.5 1796.0,449.2 1798.8,446.1 1833.7,445.3 1837.2,440.5 1855.4,439.4 1861.0,436.3 1893.8,436.3 1898.0,434.1 1900.1,432.4 1907.0,432.1 1909.0,427.8 1910.9,429.3 1917.9,429.3 1920.2,431.2 1922.0,425.9 1931.1,424.7 1943.5,424.3 1945.8,426.5 1948.4,429.6 1950.0,418.8 1959.0,418.8 1961.3,417.2 1969.9,417.2 1973.0,415.0 1983.9,414.7 1986.2,416.3 1993.9,416.3 1995.0,412.9 1998.6,417.2 2000.6,412.2 2008.7,412.2 2011.8,413.2 2019.6,412.9 2025.8,411.9 2032.8,411.9 2035.1,413.5 2038.2,411.0 2053.7,411.0 2056.8,411.9 2060.7,409.8 2070.0,409.4 2073.9,414.4 2082.5,414.4 2084.8,410.7 2088.7,409.8 2098.0,409.8 2101.1,408.2 2116.6,406.3 2119.7,398.6 2122.0,401.4 2123.6,401.4 2125.2,395.5 2132.9,395.5 2134.8,385.2 2145.3,383.7 2148.4,381.8 2153.9,381.8 2161.6,375.0 2167.9,374.3 2171.0,371.9 2174.8,370.0 2179.5,369.4 2184.2,362.2 2195.0,362.2 2200.5,361.3 2219.9,360.7 2223.0,359.1 2232.3,358.5 2234.2,350.7 2236.2,357.3 2243.2,357.9 2246.6,351.7 2254.8,351.4 2256.4,350.1 2270.3,350.1 2272.4,353.2 2273.9,346.7 2275.8,350.7 2279.7,350.7 2281.2,343.6 2283.1,343.0" fill="none" stroke="#3f62c9" stroke-width="3.1" stroke-linejoin="round"/>
<path d="M854.3 578.400L857.200 581.200L854.300 584Z" fill="#d4442a"/>
<text x="788.14" y="314.35" font-size="20.8" fill="#444" stroke="#444" stroke-width=".3">800,…</text>
<text x="788.14" y="383.1" font-size="20.8" fill="#444" stroke="#444" stroke-width=".3">600,…</text>
<text x="788.14" y="452.3" font-size="20.8" fill="#444" stroke="#444" stroke-width=".3">400,…</text>
<text x="788.14" y="519.8000000000001" font-size="20.8" fill="#444" stroke="#444" stroke-width=".3">200,…</text>
<text x="837.85" y="588.8000000000001" font-size="20.8" fill="#444" stroke="#444" stroke-width=".3">0</text>
<text x="781.28" y="657.6" font-size="20.8" fill="#444" stroke="#444" stroke-width=".3">-200,…</text>
<text x="855.00" y="298" font-size="20.8" font-weight="bold" fill="#000" stroke="#000" stroke-width=".3" letter-spacing="0.048">Cumulative profit</text>
<text x="856.8" y="663" font-size="12.4" text-anchor="end" fill="#222" transform="rotate(-30 856.8 663)">Start</text>
<text x="887.2" y="663" font-size="12.4" text-anchor="end" fill="#222" transform="rotate(-30 887.2 663)">2/…</text>
<text x="917.6" y="663" font-size="12.4" text-anchor="end" fill="#222" transform="rotate(-30 917.6 663)">3/…</text>
<text x="948.0" y="663" font-size="12.4" text-anchor="end" fill="#222" transform="rotate(-30 948.0 663)">3/…</text>
<text x="978.4" y="663" font-size="12.4" text-anchor="end" fill="#222" transform="rotate(-30 978.4 663)">4/…</text>
<text x="1008.8" y="663" font-size="12.4" text-anchor="end" fill="#222" transform="rotate(-30 1008.8 663)">4/…</text>
<text x="1039.2" y="663" font-size="12.4" text-anchor="end" fill="#222" transform="rotate(-30 1039.2 663)">5/…</text>
<text x="1069.6" y="663" font-size="12.4" text-anchor="end" fill="#222" transform="rotate(-30 1069.6 663)">5/…</text>
<text x="1100.0" y="663" font-size="12.4" text-anchor="end" fill="#222" transform="rotate(-30 1100.0 663)">6/…</text>
<text x="1130.4" y="663" font-size="12.4" text-anchor="end" fill="#222" transform="rotate(-30 1130.4 663)">7/…</text>
<text x="1160.8" y="663" font-size="12.4" text-anchor="end" fill="#222" transform="rotate(-30 1160.8 663)">7/…</text>
<text x="1191.2" y="663" font-size="12.4" text-anchor="end" fill="#222" transform="rotate(-30 1191.2 663)">8/…</text>
<text x="1221.6" y="663" font-size="12.4" text-anchor="end" fill="#222" transform="rotate(-30 1221.6 663)">8/…</text>
<text x="1252.0" y="663" font-size="12.4" text-anchor="end" fill="#222" transform="rotate(-30 1252.0 663)">9/…</text>
<text x="1282.4" y="663" font-size="12.4" text-anchor="end" fill="#222" transform="rotate(-30 1282.4 663)">9/…</text>
<text x="1312.8" y="663" font-size="12.4" text-anchor="end" fill="#222" transform="rotate(-30 1312.8 663)">10…</text>
<text x="1343.2" y="663" font-size="12.4" text-anchor="end" fill="#222" transform="rotate(-30 1343.2 663)">10…</text>
<text x="1373.6" y="663" font-size="12.4" text-anchor="end" fill="#222" transform="rotate(-30 1373.6 663)">11…</text>
<text x="1404.0" y="663" font-size="12.4" text-anchor="end" fill="#222" transform="rotate(-30 1404.0 663)">12…</text>
<text x="1434.4" y="663" font-size="12.4" text-anchor="end" fill="#222" transform="rotate(-30 1434.4 663)">12…</text>
<text x="1464.8" y="663" font-size="12.4" text-anchor="end" fill="#222" transform="rotate(-30 1464.8 663)">1/…</text>
<text x="1495.2" y="663" font-size="12.4" text-anchor="end" fill="#222" transform="rotate(-30 1495.2 663)">1/…</text>
<text x="1525.6" y="663" font-size="12.4" text-anchor="end" fill="#222" transform="rotate(-30 1525.6 663)">2/…</text>
<text x="1556.0" y="663" font-size="12.4" text-anchor="end" fill="#222" transform="rotate(-30 1556.0 663)">2/…</text>
<text x="1586.5" y="663" font-size="12.4" text-anchor="end" fill="#222" transform="rotate(-30 1586.5 663)">3/…</text>
<text x="1616.9" y="663" font-size="12.4" text-anchor="end" fill="#222" transform="rotate(-30 1616.9 663)">3/…</text>
<text x="1647.3" y="663" font-size="12.4" text-anchor="end" fill="#222" transform="rotate(-30 1647.3 663)">4/…</text>
<text x="1677.7" y="663" font-size="12.4" text-anchor="end" fill="#222" transform="rotate(-30 1677.7 663)">5/…</text>
<text x="1708.1" y="663" font-size="12.4" text-anchor="end" fill="#222" transform="rotate(-30 1708.1 663)">5/…</text>
<text x="1738.5" y="663" font-size="12.4" text-anchor="end" fill="#222" transform="rotate(-30 1738.5 663)">6/…</text>
<text x="1768.9" y="663" font-size="12.4" text-anchor="end" fill="#222" transform="rotate(-30 1768.9 663)">6/…</text>
<text x="1799.3" y="663" font-size="12.4" text-anchor="end" fill="#222" transform="rotate(-30 1799.3 663)">7/…</text>
<text x="1829.7" y="663" font-size="12.4" text-anchor="end" fill="#222" transform="rotate(-30 1829.7 663)">7/…</text>
<text x="1860.1" y="663" font-size="12.4" text-anchor="end" fill="#222" transform="rotate(-30 1860.1 663)">8/…</text>
<text x="1890.5" y="663" font-size="12.4" text-anchor="end" fill="#222" transform="rotate(-30 1890.5 663)">8/…</text>
<text x="1920.9" y="663" font-size="12.4" text-anchor="end" fill="#222" transform="rotate(-30 1920.9 663)">9/…</text>
<text x="1951.3" y="663" font-size="12.4" text-anchor="end" fill="#222" transform="rotate(-30 1951.3 663)">10…</text>
<text x="1981.7" y="663" font-size="12.4" text-anchor="end" fill="#222" transform="rotate(-30 1981.7 663)">10…</text>
<text x="2012.1" y="663" font-size="12.4" text-anchor="end" fill="#222" transform="rotate(-30 2012.1 663)">11…</text>
<text x="2042.5" y="663" font-size="12.4" text-anchor="end" fill="#222" transform="rotate(-30 2042.5 663)">11…</text>
<text x="2072.9" y="663" font-size="12.4" text-anchor="end" fill="#222" transform="rotate(-30 2072.9 663)">12…</text>
<text x="2103.3" y="663" font-size="12.4" text-anchor="end" fill="#222" transform="rotate(-30 2103.3 663)">12…</text>
<text x="2133.7" y="663" font-size="12.4" text-anchor="end" fill="#222" transform="rotate(-30 2133.7 663)">1/…</text>
<text x="2164.1" y="663" font-size="12.4" text-anchor="end" fill="#222" transform="rotate(-30 2164.1 663)">1/…</text>
<text x="2194.5" y="663" font-size="12.4" text-anchor="end" fill="#222" transform="rotate(-30 2194.5 663)">2/…</text>
<text x="2224.9" y="663" font-size="12.4" text-anchor="end" fill="#222" transform="rotate(-30 2224.9 663)">3/…</text>
<text x="2255.3" y="663" font-size="12.4" text-anchor="end" fill="#222" transform="rotate(-30 2255.3 663)">3/…</text>
<text x="2285.7" y="663" font-size="12.4" text-anchor="end" fill="#222" transform="rotate(-30 2285.7 663)">4/…</text>
<path d="M1296.5 994.2L1296.50 821.80A172.4 172.4 0 0 1 1314.82 822.78Z" fill="#4062c8" stroke="#fff" stroke-width="1.5"/>
<path d="M1296.5 994.2L1314.82 822.78A172.4 172.4 0 0 1 1318.41 823.20Z" fill="#cf4a2a" stroke="#fff" stroke-width="1.5"/>
<path d="M1296.5 994.2L1318.41 823.20A172.4 172.4 0 0 1 1350.92 830.61Z" fill="#f09e3a" stroke="#fff" stroke-width="1.5"/>
<path d="M1296.5 994.2L1350.92 830.61A172.4 172.4 0 0 1 1441.58 901.06Z" fill="#47962f" stroke="#fff" stroke-width="1.5"/>
<path d="M1296.5 994.2L1441.58 901.06A172.4 172.4 0 0 1 1460.37 940.64Z" fill="#4496c4" stroke="#fff" stroke-width="1.5"/>
<path d="M1296.5 994.2L1460.37 940.64A172.4 172.4 0 0 1 1468.66 985.18Z" fill="#cc5078" stroke="#fff" stroke-width="1.5"/>
<path d="M1296.5 994.2L1468.66 985.18A172.4 172.4 0 0 1 1468.76 1001.12Z" fill="#76a82e" stroke="#fff" stroke-width="1.5"/>
<path d="M1296.5 994.2L1468.76 1001.12A172.4 172.4 0 0 1 1467.50 1016.11Z" fill="#3c5e8e" stroke="#fff" stroke-width="1.5"/>
<path d="M1296.5 994.2L1467.50 1016.11A172.4 172.4 0 0 1 1466.82 1020.87Z" fill="#8e4a96" stroke="#fff" stroke-width="1.5"/>
<path d="M1296.5 994.2L1466.82 1020.87A172.4 172.4 0 0 1 1347.48 1158.89Z" fill="#52a898" stroke="#fff" stroke-width="1.5"/>
<path d="M1296.5 994.2L1347.48 1158.89A172.4 172.4 0 0 1 1296.50 1166.60Z" fill="#abaa3a" stroke="#fff" stroke-width="1.5"/>
<path d="M1296.5 994.2L1296.50 1166.60A172.4 172.4 0 0 1 1291.39 1166.52Z" fill="#e0782a" stroke="#fff" stroke-width="1.5"/>
<path d="M1296.5 994.2L1291.39 1166.52A172.4 172.4 0 0 1 1288.68 1166.42Z" fill="#8a2a1e" stroke="#fff" stroke-width="1.5"/>
<path d="M1296.5 994.2L1288.68 1166.42A172.4 172.4 0 0 1 1124.85 1010.27Z" fill="#5c1760" stroke="#fff" stroke-width="1.5"/>
<path d="M1296.5 994.2L1124.85 1010.27A172.4 172.4 0 0 1 1124.56 1006.83Z" fill="#3f9266" stroke="#fff" stroke-width="1.5"/>
<path d="M1296.5 994.2L1124.56 1006.83A172.4 172.4 0 0 1 1124.37 984.58Z" fill="#5b72a3" stroke="#fff" stroke-width="1.5"/>
<path d="M1296.5 994.2L1124.37 984.58A172.4 172.4 0 0 1 1128.22 956.74Z" fill="#3d3da6" stroke="#fff" stroke-width="1.5"/>
<path d="M1296.5 994.2L1128.22 956.74A172.4 172.4 0 0 1 1285.67 822.14Z" fill="#ad7535" stroke="#fff" stroke-width="1.5"/>
<path d="M1296.5 994.2L1285.67 822.14A172.4 172.4 0 0 1 1293.94 821.82Z" fill="#5bd43f" stroke="#fff" stroke-width="1.5"/>
<path d="M1296.5 994.2L1293.94 821.82A172.4 172.4 0 0 1 1296.50 821.80Z" fill="#ffffff" stroke="#fff" stroke-width="1.5"/>
<text x="1187.00" y="907.5" font-size="20.8" fill="#fff" stroke="#fff" stroke-width=".3" letter-spacing="-0.081">20.3%</text>
<text x="1185.80" y="1094.2" font-size="20.8" fill="#fff" stroke="#fff" stroke-width=".3" letter-spacing="-0.450">23%</text>
<text x="1359.60" y="1080.5" font-size="20.8" fill="#fff" stroke="#fff" stroke-width=".3" letter-spacing="-0.443">17.8%</text>
<text x="1343.75" y="904.5" font-size="20.8" fill="#fff" stroke="#fff" stroke-width=".3" letter-spacing="-0.581">10.6%</text>
<text x="855.00" y="813.75" font-size="20.8" font-weight="bold" fill="#000" stroke="#000" stroke-width=".3" letter-spacing="0.039">Symbol - Number of trades</text>
<circle cx="1782.2" cy="832.4" r="10.4" fill="#4062c8"/>
<text x="1801.00" y="839.4" font-size="20.8" fill="#222" stroke="#222" stroke-width=".3">AUDCAD+</text>
<circle cx="1782.2" cy="866.9" r="10.4" fill="#cf4a2a"/>
<text x="1801.00" y="873.9" font-size="20.8" fill="#222" stroke="#222" stroke-width=".3">AUDJPY+</text>
<circle cx="1782.2" cy="901.3" r="10.4" fill="#f09e3a"/>
<text x="1801.00" y="908.3" font-size="20.8" fill="#222" stroke="#222" stroke-width=".3">AUDNZD+</text>
<circle cx="1782.2" cy="935.8" r="10.4" fill="#47962f"/>
<text x="1801.00" y="942.8" font-size="20.8" fill="#222" stroke="#222" stroke-width=".3">AUDUSD+</text>
<circle cx="1782.2" cy="970.2" r="10.4" fill="#4496c4"/>
<text x="1801.00" y="977.2" font-size="20.8" fill="#222" stroke="#222" stroke-width=".3">CHFJPY+</text>
<circle cx="1782.2" cy="1004.7" r="10.4" fill="#cc5078"/>
<text x="1801.00" y="1011.7" font-size="20.8" fill="#222" stroke="#222" stroke-width=".3">EURAUD+</text>
<circle cx="1782.2" cy="1039.2" r="10.4" fill="#76a82e"/>
<text x="1801.00" y="1046.2" font-size="20.8" fill="#222" stroke="#222" stroke-width=".3">EURCAD+</text>
<circle cx="1782.2" cy="1073.6" r="10.4" fill="#3c5e8e"/>
<text x="1801.00" y="1080.6" font-size="20.8" fill="#222" stroke="#222" stroke-width=".3">EURGBP+</text>
<circle cx="1782.2" cy="1108.1" r="10.4" fill="#8e4a96"/>
<text x="1801.00" y="1115.1" font-size="20.8" fill="#222" stroke="#222" stroke-width=".3">EURJPY+</text>
<path d="M1772.400 1166.600L1782.800 1147L1793.100 1166.600Z" fill="#cccccc"/>
<path d="M1836.500 1146L1857.900 1146L1847.200 1166.400Z" fill="#0011cc"/>
<text x="1801.30" y="1164" font-size="20.8" fill="#0011cc" stroke="#0011cc" stroke-width=".3">1/3</text>
<rect x="955.95" y="1338.4" width="1.5" height="40" fill="#ebebeb"/>
<rect x="1057.95" y="1338.4" width="1.5" height="40" fill="#cccccc"/>
<rect x="1159.95" y="1338.4" width="1.5" height="40" fill="#ebebeb"/>
<rect x="1261.95" y="1338.4" width="1.5" height="40" fill="#cccccc"/>
<rect x="1363.95" y="1338.4" width="1.5" height="40" fill="#ebebeb"/>
<rect x="1465.95" y="1338.4" width="1.5" height="40" fill="#cccccc"/>
<rect x="1567.95" y="1338.4" width="1.5" height="40" fill="#ebebeb"/>
<rect x="1669.95" y="1338.4" width="1.5" height="40" fill="#cccccc"/>
<rect x="1771.95" y="1338.4" width="1.5" height="40" fill="#ebebeb"/>
<rect x="1873.95" y="1338.4" width="1.5" height="40" fill="#cccccc"/>
<rect x="1975.95" y="1338.4" width="1.5" height="40" fill="#ebebeb"/>
<rect x="2077.95" y="1338.4" width="1.5" height="40" fill="#cccccc"/>
<rect x="2179.95" y="1338.4" width="1.5" height="40" fill="#ebebeb"/>
<rect x="2281.95" y="1338.4" width="1.5" height="40" fill="#cccccc"/>
<rect x="854.3" y="1337.65" width="1429" height="1.5" fill="#cccccc"/>
<rect x="854" y="1338.400" width="1.5" height="40" fill="#333"/>
<circle cx="862.5" cy="1339.1" r="6.9" fill="#4062c8"/>
<circle cx="862.3" cy="1356.25" r="6.9" fill="#4062c8"/>
<circle cx="968.5" cy="1355.1" r="6.9" fill="#4062c8"/>
<text x="807.12" y="1343.75" font-size="14.4" fill="#444" stroke="#444" stroke-width=".3">50,0…</text>
<text x="854.40" y="1329.75" font-size="20.8" font-weight="bold" fill="#000" stroke="#000" stroke-width=".3" letter-spacing="0.059">All trades: Duration - Profitability</text></svg>
<div class="a" style="left:935px;top:65px;width:528px;height:39.5px;background:#e3e3e3;border:1px solid #d2d2d2;box-sizing:border-box;border-radius:2px;box-shadow:0 4px 14px rgba(0,0,0,.22),0 1px 3px rgba(0,0,0,.12);"></div>
<div class="t" style="left:949.25px;top:70.77px;font-size:22.3px;line-height:27px;color:#454545;letter-spacing:0.603px;-webkit-text-stroke:0.3px #454545;">View insights and analysis of the trading results</div>
</div></body></html>
